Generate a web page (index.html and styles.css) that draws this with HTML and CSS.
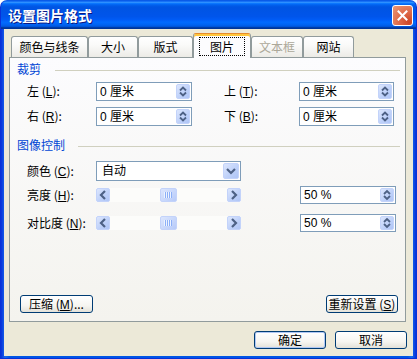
FILE: index.html
```html
<!DOCTYPE html>
<html lang="zh-CN">
<head>
    <meta charset="UTF-8">
    <title>设置图片格式</title>
    <link rel="stylesheet" href="styles.css">
</head>
<body>
    <div class="window">
        <div class="titlebar">
            <span class="title">设置图片格式</span>
            <span class="close">
                <svg width="11" height="11" viewBox="0 0 11 11"><path d="M1.5 1.5 L9.5 9.5 M9.5 1.5 L1.5 9.5" stroke="#fff" stroke-width="2" stroke-linecap="square"/></svg>
            </span>
        </div>

        <div class="client">
            <div class="tabs">
                <div class="tab t1">颜色与线条</div>
                <div class="tab t2">大小</div>
                <div class="tab t3">版式</div>
                <div class="tab t4 on"><span class="focus">图片</span></div>
                <div class="tab t5 off">文本框</div>
                <div class="tab t6">网站</div>
            </div>

            <div class="panel">
                <div class="group-title"><span>裁剪</span><i class="rule r1"></i></div>

                <div class="row crop-row">
                    <label class="lbl">左 (<u>L</u>):</label>
                    <div class="field"><span>0 厘米</span><span class="spin"></span></div>
                    <span></span>
                    <label class="lbl">上 (<u>T</u>):</label>
                    <div class="field"><span>0 厘米</span><span class="spin"></span></div>
                </div>
                <div class="row crop-row">
                    <label class="lbl">右 (<u>R</u>):</label>
                    <div class="field"><span>0 厘米</span><span class="spin"></span></div>
                    <span></span>
                    <label class="lbl">下 (<u>B</u>):</label>
                    <div class="field"><span>0 厘米</span><span class="spin"></span></div>
                </div>

                <div class="group-title g2"><span>图像控制</span><i class="rule r2"></i></div>

                <div class="row color-row">
                    <label class="lbl">颜色 (<u>C</u>):</label>
                    <div class="field combo"><span>自动</span><span class="drop"></span></div>
                </div>
                <div class="row level-row first">
                    <label class="lbl">亮度 (<u>H</u>):</label>
                    <div class="slider">
                        <span class="sbtn left"></span>
                        <span class="track-a"></span>
                        <span class="thumb"></span>
                        <span class="track-b"></span>
                        <span class="sbtn right"></span>
                    </div>
                    <span></span>
                    <div class="field small"><span>50 %</span><span class="spin"></span></div>
                </div>
                <div class="row level-row">
                    <label class="lbl">对比度 (<u>N</u>):</label>
                    <div class="slider">
                        <span class="sbtn left"></span>
                        <span class="track-a"></span>
                        <span class="thumb"></span>
                        <span class="track-b"></span>
                        <span class="sbtn right"></span>
                    </div>
                    <span></span>
                    <div class="field small"><span>50 %</span><span class="spin"></span></div>
                </div>

                <div class="panel-foot">
                    <button class="btn compress">压缩 (<u>M</u>)...</button>
                    <button class="btn reset">重新设置 (<u>S</u>)</button>
                </div>
            </div>

            <div class="dialog-foot">
                <button class="btn default">确定</button>
                <button class="btn">取消</button>
            </div>
        </div>
    </div>
</body>
</html>
```

FILE: styles.css
```css
* {
    margin: 0;
    padding: 0;
    box-sizing: border-box;
}

body {
    width: 417px;
    height: 359px;
    overflow: hidden;
    font-family: "Liberation Sans", "Noto Sans CJK SC", sans-serif;
    font-size: 12px;
    color: #000;
}

.window {
    width: 417px;
    height: 359px;
    display: flex;
    flex-direction: column;
    background: linear-gradient(90deg, #0831D9, #166AEE 1%, #0055E5 2%, #0055E5 98%, #166AEE 99%, #0831D9);
    border: 1px solid #0831D9;
    border-top-color: #0A5BE8;
    border-radius: 7px 7px 0 0;
}

.titlebar {
    height: 28px;
    display: flex;
    align-items: center;
    justify-content: space-between;
    padding: 0 3px 0 7px;
    border-radius: 6px 6px 0 0;
    background: linear-gradient(#0058EE 0%, #3593FF 4%, #288EFF 6%, #127DFF 8%, #036FFC 10%, #0262EE 14%, #0057E5 20%, #0054E3 24%, #0055EB 56%, #005BF5 66%, #026AFE 76%, #0062EF 86%, #0052D6 92%, #0040AB 94%, #003092 100%);
}

.title {
    color: #fff;
    font-family: "Noto Sans CJK SC", sans-serif;
    font-weight: bold;
    font-size: 14px;
    line-height: 18px;
    text-shadow: 1px 1px 0 #0A1883;
}

.close {
    width: 21px;
    height: 21px;
    display: flex;
    align-items: center;
    justify-content: center;
    border: 1px solid #fff;
    border-radius: 3px;
    background: radial-gradient(circle at 85% 85%, #CC4627, #DF6A49 45%, #E9906E 90%);
}

.client {
    flex: 1;
    margin: 0 3px 2px 3px;
    background: #ECE9D8;
    padding: 4px 7px 0 5px;
    display: flex;
    flex-direction: column;
}

/* tabs */
.tabs {
    height: 24px;
    display: flex;
    align-items: flex-end;
    padding-left: 2px;
    position: relative;
    z-index: 1;
}

.tab {
    height: 21px;
    border: 1px solid #919B9C;
    border-bottom: none;
    border-radius: 3px 3px 0 0;
    background: linear-gradient(#FFFFFF, #FAFAF9 40%, #ECEBE6);
    text-align: center;
    line-height: 19px;
    font-family: "Noto Sans CJK SC", sans-serif;
}

.t1 { width: 77px; }
.t2 { width: 50px; }
.t3 { width: 55px; }
.t4 { width: 58px; }
.t5 { width: 52px; }
.t6 { width: 51px; }

.tab.off {
    color: #ACA899;
}

.tab.on {
    height: 25px;
    margin-bottom: -1px;
    background: #FCFCFE;
    border-top: 1px solid #E68B2C;
    box-shadow: inset 0 2px 0 #FFC73C;
    padding-top: 3px;
    line-height: 17px;
}

.focus {
    display: inline-block;
    border: 1px dotted #000;
    padding: 0 10px;
    line-height: 17px;
}

/* panel */
.panel {
    height: 265px;
    border: 1px solid #919B9C;
    background: linear-gradient(#FCFCFE, #F4F3EE);
    display: flex;
    flex-direction: column;
    padding: 4px 0 8px 0;
}

.group-title {
    height: 14px;
    display: flex;
    align-items: center;
    padding: 0 5px 0 7px;
    color: #0046D5;
    font-family: "Noto Sans CJK SC", sans-serif;
    line-height: 14px;
}

.group-title.g2 {
    margin-top: 12px;
}

.rule {
    flex: 1;
    height: 1px;
    background: #D0D0BF;
    margin-top: 2px;
}

.r1 { margin-left: 14px; }
.r2 { margin-left: 13px; }

.row {
    display: grid;
    align-items: center;
    padding-left: 17px;
}

.crop-row {
    height: 19px;
    margin-top: 6px;
    grid-template-columns: 69px 96px 32px 75px 95px;
}

.color-row {
    height: 20px;
    margin-top: 9px;
    grid-template-columns: 69px 145px;
}

.level-row {
    height: 18px;
    margin-top: 10px;
    grid-template-columns: 69px 145px 59px 96px;
}

.level-row.first {
    margin-top: 5px;
}

.lbl {
    font-family: "Noto Sans CJK SC", sans-serif;
    line-height: 14px;
    white-space: nowrap;
}

.lbl u {
    font-family: "Liberation Sans", sans-serif;
}

.field {
    height: 100%;
    border: 1px solid #7F9DB9;
    background: #fff;
    display: flex;
    align-items: center;
    justify-content: space-between;
    padding: 0 1px 0 3px;
    font-family: "Liberation Sans", "Noto Sans CJK SC", sans-serif;
    line-height: 14px;
}

.spin {
    width: 14px;
    height: 15px;
    border-radius: 2px;
    background:
        url("data:image/svg+xml;utf8,<svg xmlns='http://www.w3.org/2000/svg' width='14' height='15'><path d='M4 6.5 L7 3.5 L10 6.5 M4 8.5 L7 11.5 L10 8.5' fill='none' stroke='%234D6185' stroke-width='1.8'/></svg>") center no-repeat,
        linear-gradient(135deg, #DCE6FD, #BDD0F9 60%, #AFC5F6);
    border: 1px solid #C3D3FA;
}

.field.small .spin {
    height: 14px;
}

.drop {
    width: 16px;
    height: 16px;
    border-radius: 2px;
    border: 1px solid #C3D3FA;
    background:
        url("data:image/svg+xml;utf8,<svg xmlns='http://www.w3.org/2000/svg' width='16' height='16'><path d='M4 6 L8 10 L12 6' fill='none' stroke='%234D6185' stroke-width='2.2'/></svg>") center no-repeat,
        linear-gradient(135deg, #DCE6FD, #BDD0F9 60%, #AFC5F6);
}

.combo {
    padding-left: 5px;
}

/* slider */
.slider {
    height: 14px;
    display: flex;
    background: #FCFCFA;
}

.sbtn {
    width: 14px;
    height: 14px;
    border-radius: 2px;
    border: 1px solid #C3D3FA;
    background-color: #C1D3FB;
    background-position: center;
    background-repeat: no-repeat;
}

.sbtn.left {
    background-image:
        url("data:image/svg+xml;utf8,<svg xmlns='http://www.w3.org/2000/svg' width='12' height='12'><path d='M8 2 L4 6 L8 10' fill='none' stroke='%234D6185' stroke-width='2.2'/></svg>"),
        linear-gradient(135deg, #DCE6FD, #BDD0F9 60%, #AFC5F6);
}

.sbtn.right {
    background-image:
        url("data:image/svg+xml;utf8,<svg xmlns='http://www.w3.org/2000/svg' width='12' height='12'><path d='M4 2 L8 6 L4 10' fill='none' stroke='%234D6185' stroke-width='2.2'/></svg>"),
        linear-gradient(135deg, #DCE6FD, #BDD0F9 60%, #AFC5F6);
}

.track-a {
    width: 50px;
}

.track-b {
    flex: 1;
}

.thumb {
    width: 17px;
    height: 14px;
    border-radius: 2px;
    border: 1px solid #C3D3FA;
    background:
        url("data:image/svg+xml;utf8,<svg xmlns='http://www.w3.org/2000/svg' width='9' height='6'><path d='M0.5 0 V6 M2.5 0 V6 M4.5 0 V6 M6.5 0 V6' stroke='%23EEF4FE' stroke-width='1'/><path d='M1.5 0 V6 M3.5 0 V6 M5.5 0 V6 M7.5 0 V6' stroke='%238CB0F8' stroke-width='1'/></svg>") center no-repeat,
        linear-gradient(135deg, #DCE6FD, #C6D6FB 60%, #B6CAF8);
}

/* buttons */
.btn {
    height: 18px;
    border: 1px solid #003C74;
    border-radius: 3px;
    background: linear-gradient(#FFFFFF, #F6F5F1 60%, #E3E1D8);
    font-family: "Noto Sans CJK SC", sans-serif;
    font-size: 12px;
    line-height: 14px;
    color: #000;
}

.btn u {
    font-family: "Liberation Sans", sans-serif;
}

.panel-foot {
    margin-top: auto;
    display: flex;
    justify-content: space-between;
    padding: 0 7px 0 10px;
}

.compress { width: 73px; }
.reset { width: 72px; }

.dialog-foot {
    margin-top: 9px;
    display: flex;
    justify-content: flex-end;
    gap: 9px;
    margin-right: -1px;
}

.dialog-foot .btn {
    width: 72px;
}

.btn.default {
    box-shadow: inset 0 0 0 1px #B0C8F4;
}
```
